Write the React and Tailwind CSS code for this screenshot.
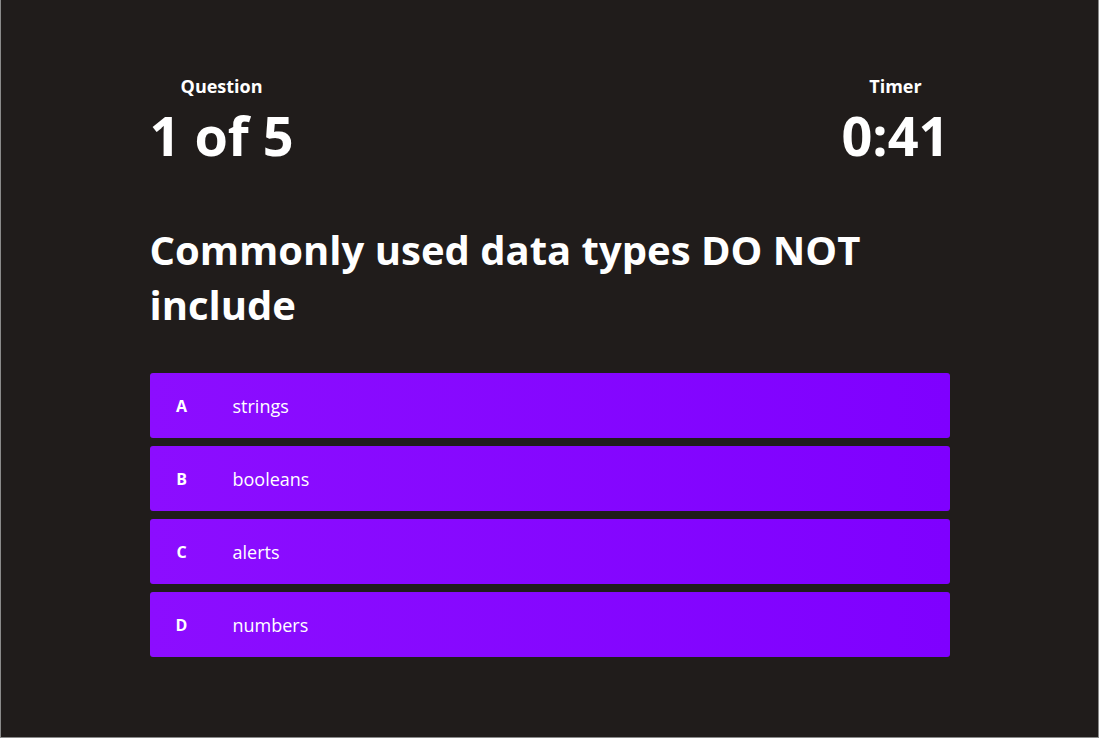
import React from "react";

const answers = [
  { letter: "A", text: "strings" },
  { letter: "B", text: "booleans" },
  { letter: "C", text: "alerts" },
  { letter: "D", text: "numbers" },
];

const App = () => {
  return (
    <div
      className="min-h-[738px] bg-[#201c1b] text-white border-x border-b border-[#8a8a8a]"
      style={{ fontFamily: '"Open Sans", "Noto Sans", sans-serif' }}
    >
      <div className="w-[800px] mx-auto pt-[74px]">
        {/* Header */}
        <div className="flex justify-between items-start">
          <div className="flex flex-col items-center">
            <span className="text-lg font-bold leading-6">Question</span>
            <span className="mt-[6px] text-[54px] font-bold leading-[62px]">1 of 5</span>
          </div>
          <div className="flex flex-col items-center">
            <span className="text-lg font-bold leading-6">Timer</span>
            <span className="mt-[6px] text-[54px] font-bold leading-[62px]">0:41</span>
          </div>
        </div>

        {/* Question */}
        <h1 className="mt-[56px] text-[40px] font-bold leading-[55px]">
          Commonly used data types DO NOT include
        </h1>

        {/* Answers */}
        <div className="mt-[41px] flex flex-col gap-2">
          {answers.map((a) => (
            <button
              key={a.letter}
              className="h-[65px] w-full flex items-center rounded-[3px] bg-gradient-to-r from-[#8c0dff] to-[#7f00ff] text-left"
            >
              <span className="w-[64px] text-center text-base font-bold">{a.letter}</span>
              <span className="ml-[19px] text-lg">{a.text}</span>
            </button>
          ))}
        </div>
      </div>
    </div>
  );
};

export default App;
